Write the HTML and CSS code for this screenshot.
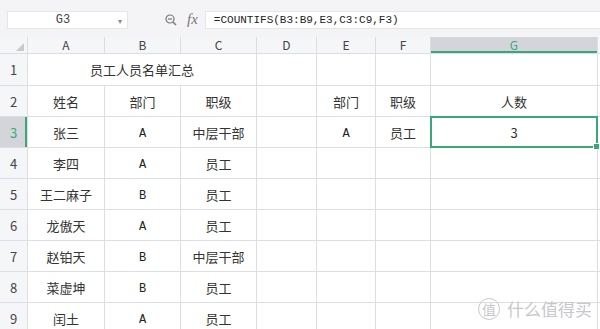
FILE: index.html
```html
<!DOCTYPE html>
<html lang="zh">
<head>
    <meta charset="UTF-8">
    <title>员工人员名单汇总</title>
    <link rel="stylesheet" href="styles.css">
</head>
<body>
    <div class="sheet">
        <!-- 编辑栏 -->
        <div class="toolbar">
            <div class="name-box">
                <span class="name-text">G3</span>
                <span class="name-arrow">▾</span>
            </div>
            <svg class="zoom-icon" width="12" height="12" viewBox="0 0 12 12">
                <circle cx="5" cy="5" r="4" fill="none" stroke="#777" stroke-width="1.2"/>
                <line x1="3" y1="5" x2="7" y2="5" stroke="#777" stroke-width="1.2"/>
                <line x1="8" y1="8" x2="11" y2="11" stroke="#777" stroke-width="1.4"/>
            </svg>
            <span class="fx">fx</span>
            <div class="formula">=COUNTIFS(B3:B9,E3,C3:C9,F3)</div>
        </div>

        <!-- 表格 -->
        <div class="grid">
            <div class="corner"><span class="corner-tri"></span></div>
            <div class="col-head">A</div>
            <div class="col-head">B</div>
            <div class="col-head">C</div>
            <div class="col-head">D</div>
            <div class="col-head">E</div>
            <div class="col-head">F</div>
            <div class="col-head active">G</div>
            <div class="col-head"></div>

            <div class="row-head">1</div>
            <div class="cell span3">员工人员名单汇总</div>
            <div class="cell"></div>
            <div class="cell"></div>
            <div class="cell"></div>
            <div class="cell"></div>
            <div class="cell"></div>

            <div class="row-head">2</div>
            <div class="cell">姓名</div>
            <div class="cell">部门</div>
            <div class="cell">职级</div>
            <div class="cell"></div>
            <div class="cell">部门</div>
            <div class="cell">职级</div>
            <div class="cell">人数</div>
            <div class="cell"></div>

            <div class="row-head active">3</div>
            <div class="cell">张三</div>
            <div class="cell latin">A</div>
            <div class="cell">中层干部</div>
            <div class="cell"></div>
            <div class="cell latin">A</div>
            <div class="cell">员工</div>
            <div class="cell selected">3<span class="handle"></span></div>
            <div class="cell"></div>

            <div class="row-head">4</div>
            <div class="cell">李四</div>
            <div class="cell latin">A</div>
            <div class="cell">员工</div>
            <div class="cell"></div><div class="cell"></div><div class="cell"></div><div class="cell"></div><div class="cell"></div>

            <div class="row-head">5</div>
            <div class="cell">王二麻子</div>
            <div class="cell latin">B</div>
            <div class="cell">员工</div>
            <div class="cell"></div><div class="cell"></div><div class="cell"></div><div class="cell"></div><div class="cell"></div>

            <div class="row-head">6</div>
            <div class="cell">龙傲天</div>
            <div class="cell latin">A</div>
            <div class="cell">员工</div>
            <div class="cell"></div><div class="cell"></div><div class="cell"></div><div class="cell"></div><div class="cell"></div>

            <div class="row-head">7</div>
            <div class="cell">赵铂天</div>
            <div class="cell latin">B</div>
            <div class="cell">中层干部</div>
            <div class="cell"></div><div class="cell"></div><div class="cell"></div><div class="cell"></div><div class="cell"></div>

            <div class="row-head">8</div>
            <div class="cell">菜虚坤</div>
            <div class="cell latin">B</div>
            <div class="cell">员工</div>
            <div class="cell"></div><div class="cell"></div><div class="cell"></div><div class="cell"></div><div class="cell"></div>

            <div class="row-head">9</div>
            <div class="cell">闰土</div>
            <div class="cell latin">A</div>
            <div class="cell">员工</div>
            <div class="cell"></div><div class="cell"></div><div class="cell"></div><div class="cell"></div><div class="cell"></div>
        </div>

        <div class="watermark"><span class="wm-circle">值</span>什么值得买</div>
    </div>
</body>
</html>
```

FILE: styles.css
```css
:root {
    --line: #dcdde5;
    --head: #f5f6f8;
    --green: #3aa876;
    --text: #333;
}

body {
    margin: 0;
    padding: 0;
    background: #fff;
    font-family: "Noto Sans CJK SC", "Noto Sans", sans-serif;
    color: var(--text);
    overflow: hidden;
}

.sheet {
    position: relative;
    width: 600px;
    height: 329px;
    overflow: hidden;
}

.toolbar {
    height: 37px;
    background: #f4f4f6;
    display: flex;
    align-items: flex-start;
    padding-top: 11px;
    box-sizing: border-box;
}

.name-box {
    margin-left: 7px;
    width: 121px;
    height: 18px;
    background: #fff;
    border: 1px solid #e6e6e6;
    box-sizing: border-box;
    display: flex;
    align-items: center;
    position: relative;
}

.name-text {
    flex: 1;
    text-align: center;
    font-family: "Liberation Mono", monospace;
    font-size: 12px;
    color: #444;
}

.name-arrow {
    font-size: 8px;
    color: #888;
    margin-right: 5px;
}

.zoom-icon {
    margin: 3px 0 0 37px;
}

.fx {
    font-family: "Liberation Serif", serif;
    font-style: italic;
    font-size: 15px;
    color: #777;
    margin: -1px 0 0 10px;
    line-height: 18px;
}

.formula {
    margin-left: 7px;
    flex: 1;
    height: 18px;
    background: #fff;
    border: 1px solid #e6e6e6;
    border-right: none;
    box-sizing: border-box;
    padding-left: 8px;
    font-family: "Liberation Mono", monospace;
    font-size: 11px;
    line-height: 16px;
    color: #222;
}

.grid {
    display: grid;
    grid-template-columns: 27px 76px 75px 75px 59px 58px 54px 166px 1fr;
    grid-template-rows: 16px 31px repeat(8, 30px);
    gap: 1px;
    background: var(--line);
    border-bottom: 1px solid var(--line);
}

.corner,
.col-head {
    background: var(--head);
    font-size: 12px;
    color: #444;
    text-align: center;
    line-height: 16px;
}

.corner {
    position: relative;
}

.corner-tri {
    position: absolute;
    right: 3px;
    bottom: 2px;
    width: 0;
    height: 0;
    border-left: 8px solid transparent;
    border-bottom: 8px solid #c9c9cc;
}

.col-head.active {
    background: #d3d5db;
    color: var(--green);
    box-shadow: inset 0 -2px 0 var(--green);
}

.row-head {
    background: var(--head);
    font-size: 13px;
    color: #444;
    text-align: center;
    display: flex;
    align-items: center;
    justify-content: center;
}

.row-head.active {
    background: #d3d5db;
    color: var(--green);
    box-shadow: inset -2px 0 0 var(--green);
}

.cell {
    background: #fff;
    font-size: 13px;
    display: flex;
    align-items: center;
    justify-content: center;
    position: relative;
}

.span3 {
    grid-column: span 3;
}

.latin {
    font-family: "Liberation Mono", monospace;
    font-size: 12px;
    color: #222;
    padding-top: 4px;
}

.selected {
    box-shadow: 0 0 0 1px var(--green), inset 0 0 0 1px var(--green);
    z-index: 1;
}

.handle {
    position: absolute;
    right: -3px;
    bottom: -3px;
    width: 5px;
    height: 5px;
    background: var(--green);
    border: 1px solid #fff;
}

.watermark {
    position: absolute;
    left: 478px;
    top: 296px;
    display: flex;
    align-items: center;
    font-size: 17px;
    color: #c8c8cc;
}

.wm-circle {
    width: 20px;
    height: 20px;
    border: 1.5px solid #c8c8cc;
    border-radius: 50%;
    display: flex;
    align-items: center;
    justify-content: center;
    font-size: 14px;
    margin-right: 7px;
}
```
